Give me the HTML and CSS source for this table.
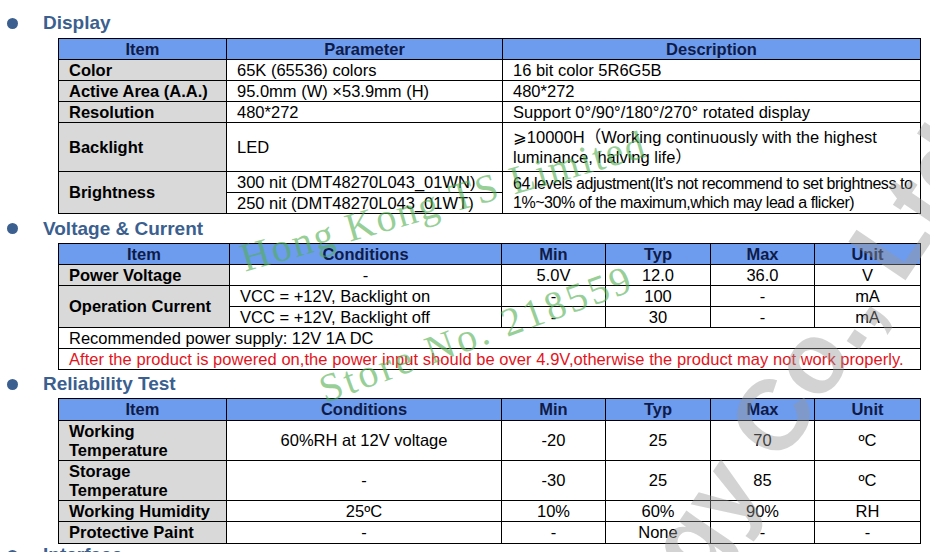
FILE: index.html
```html
<!DOCTYPE html>
<html>
<head>
<meta charset="utf-8">
<link rel="stylesheet" href="styles.css">
</head>
<body>
<div class="page">
  <div class="heading h1"><span class="bullet"></span>Display</div>
  <table class="spec">
    <colgroup><col style="width:168px"><col style="width:276px"><col style="width:418px"></colgroup>
    <tr class="r21"><th>Item</th><th>Parameter</th><th>Description</th></tr>
    <tr class="r21"><td class="item">Color</td><td>65K (65536) colors</td><td>16 bit color 5R6G5B</td></tr>
    <tr class="r21"><td class="item">Active Area (A.A.)</td><td>95.0mm (W) ×53.9mm (H)</td><td>480*272</td></tr>
    <tr class="r21"><td class="item">Resolution</td><td>480*272</td><td>Support 0°/90°/180°/270° rotated display</td></tr>
    <tr class="r49"><td class="item">Backlight</td><td>LED</td><td><span class="ge">⩾</span>10000H<span class="cjk">（</span>Working continuously with the highest<br>luminance, halving life<span class="cjk">）</span></td></tr>
    <tr class="r21"><td class="item" rowspan="2">Brightness</td><td>300 nit (DMT48270L043_01WN)</td><td class="tight" rowspan="2">64 levels adjustment(It's not recommend to set brightness to<br>1%~30% of the maximum,which may lead a flicker)</td></tr>
    <tr class="r21"><td>250 nit (DMT48270L043_01WT)</td></tr>
  </table>

  <div class="heading h2"><span class="bullet"></span>Voltage &amp; Current</div>
  <table class="spec">
    <colgroup><col style="width:171px"><col style="width:272px"><col style="width:104px"><col style="width:105px"><col style="width:104px"><col style="width:106px"></colgroup>
    <tr class="r21"><th>Item</th><th>Conditions</th><th>Min</th><th>Typ</th><th>Max</th><th>Unit</th></tr>
    <tr class="r21"><td class="item">Power Voltage</td><td class="c">-</td><td class="c">5.0V</td><td class="c">12.0</td><td class="c">36.0</td><td class="c">V</td></tr>
    <tr class="r21"><td class="item" rowspan="2">Operation Current</td><td>VCC = +12V, Backlight on</td><td class="c">-</td><td class="c">100</td><td class="c">-</td><td class="c">mA</td></tr>
    <tr class="r21"><td>VCC = +12V, Backlight off</td><td class="c">-</td><td class="c">30</td><td class="c">-</td><td class="c">mA</td></tr>
    <tr class="r21"><td colspan="6">Recommended power supply: 12V 1A DC</td></tr>
    <tr class="r21"><td colspan="6" class="red">After the product is powered on,the power input should be over 4.9V,otherwise the product may not work properly.</td></tr>
  </table>

  <div class="heading h3"><span class="bullet"></span>Reliability Test</div>
  <table class="spec">
    <colgroup><col style="width:168px"><col style="width:275px"><col style="width:104px"><col style="width:105px"><col style="width:104px"><col style="width:106px"></colgroup>
    <tr class="r22"><th>Item</th><th>Conditions</th><th>Min</th><th>Typ</th><th>Max</th><th>Unit</th></tr>
    <tr class="r40"><td class="item">Working<br>Temperature</td><td class="c">60%RH at 12V voltage</td><td class="c">-20</td><td class="c">25</td><td class="c">70</td><td class="c">ºC</td></tr>
    <tr class="r40"><td class="item">Storage<br>Temperature</td><td class="c">-</td><td class="c">-30</td><td class="c">25</td><td class="c">85</td><td class="c">ºC</td></tr>
    <tr class="r21"><td class="item">Working Humidity</td><td class="c">25ºC</td><td class="c">10%</td><td class="c">60%</td><td class="c">90%</td><td class="c">RH</td></tr>
    <tr class="r22"><td class="item">Protective Paint</td><td class="c">-</td><td class="c">-</td><td class="c">None</td><td class="c">-</td><td class="c">-</td></tr>
  </table>

  <div class="heading h4"><span class="bullet"></span>Interface</div>

  <div class="wm wm-green wm-hk">Hong Kong TS Limited</div>
  <div class="wm wm-green wm-store">Store No. 218559</div>
  <div class="wm wm-gray">Technology Co., Ltd</div>
</div>
</body>
</html>
```
FILE: styles.css
```css
body {
  margin: 0;
  background: #ffffff;
  font-family: "Liberation Sans", Arial, "Noto Sans CJK SC", sans-serif;
  color: #000;
}
.page {
  position: relative;
  height: 552px;
  overflow: hidden;
  padding-top: 8px;
  box-sizing: border-box;
}
.heading {
  display: flex;
  align-items: center;
  height: 30px;
  font-size: 19px;
  font-weight: bold;
  color: #3b5f8f;
}
.heading.h2 { height: 29px; }
.heading.h3 { height: 28px; }
.heading.h4 { height: 22px; }
.bullet {
  width: 11px;
  height: 11px;
  border-radius: 50%;
  background: #3b5f8f;
  margin-left: 7px;
  margin-right: 25px;
  flex: none;
}
.spec {
  border-collapse: collapse;
  table-layout: fixed;
  width: 862px;
  margin-left: 58px;
  font-size: 16.5px;
}
.spec th,
.spec td {
  border: 1px solid #000;
  padding: 0 0 0 10px;
  line-height: 19px;
  white-space: nowrap;
  overflow: hidden;
  vertical-align: middle;
}
.spec th {
  background: #6d9cef;
  color: #0f1b48;
  font-weight: bold;
  text-align: center;
  padding: 0;
}
.spec td.item {
  background: #d9d9d9;
  font-weight: bold;
}
.spec td.c {
  text-align: center;
  padding: 0;
}
.spec td.tight {
  font-size: 16px;
  letter-spacing: -0.45px;
}
.spec td.red {
  color: #e3141c;
  letter-spacing: 0.05px;
}
.r21 { height: 21px; }
.r22 { height: 22px; }
.r40 { height: 40px; }
.r49 { height: 49px; }
.ge {
  font-family: "DejaVu Sans", sans-serif;
}
.cjk {
  font-family: "Noto Sans CJK SC", sans-serif;
}
.wm {
  position: absolute;
  white-space: nowrap;
  pointer-events: none;
  line-height: 1;
  transform-origin: 0 0;
}
.wm-green {
  font-family: "Liberation Serif", "Times New Roman", serif;
  font-size: 40px;
  color: rgba(80, 175, 80, 0.6);
}
.wm-hk {
  left: 236px;
  top: 240px;
  letter-spacing: 2px;
  transform: rotate(-16deg);
}
.wm-store {
  left: 314px;
  top: 372px;
  letter-spacing: 3px;
  transform: rotate(-20deg);
}
.wm-gray {
  font-size: 100px;
  font-weight: bold;
  color: rgba(150, 150, 150, 0.42);
  left: 385px;
  top: 900px;
  transform: rotate(-56deg);
}
```
